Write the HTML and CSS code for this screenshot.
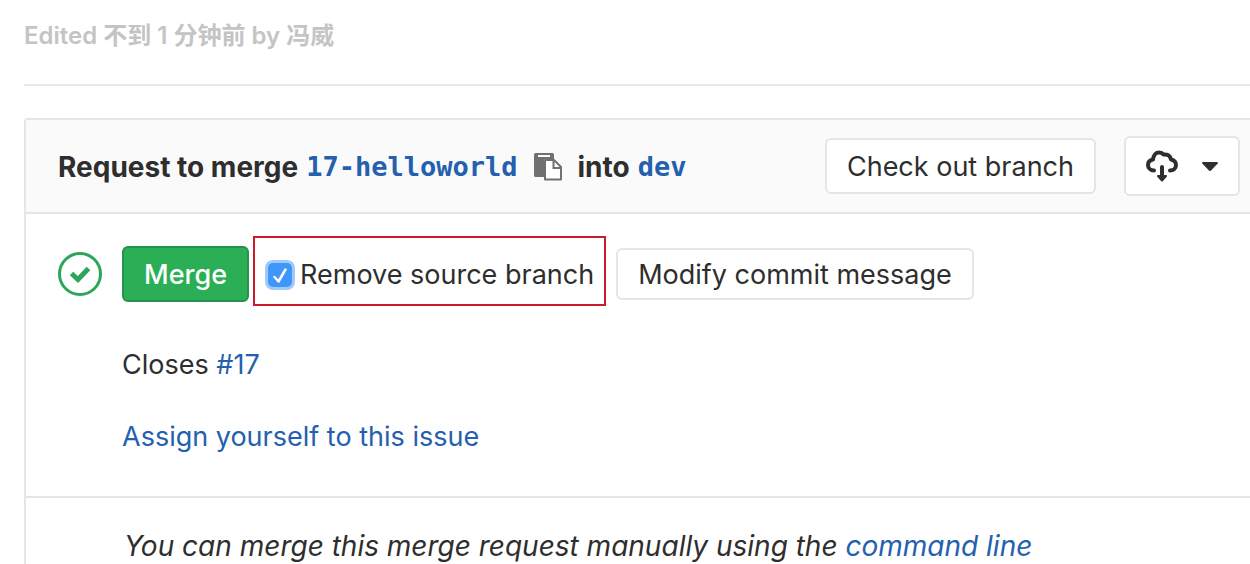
FILE: index.html
```html
<!DOCTYPE html>
<html lang="en">
<head>
<meta charset="utf-8">
<title>Merge request</title>
<link rel="stylesheet" href="styles.css">
</head>
<body>
<main class="page">
  <p class="edited">Edited <span lang="zh">不到</span> 1 <span lang="zh">分钟前</span> by <span lang="zh">冯威</span></p>
  <section class="widget">
    <header class="widget-header">
      <div class="branches">
        <span>Request to merge</span>
        <a class="branch" href="#source">17-helloworld</a>
        <button class="copy" type="button" aria-label="Copy branch name">
          <svg width="28" height="28" viewBox="0 0 28 28" fill="#707070">
            <path fill-rule="evenodd" d="M1.500 0h17A1.500 1.500 0 0 1 20 1.500V6h-7.500A2.500 2.500 0 0 0 10 8.500V24H1.500A1.500 1.500 0 0 1 0 22.500v-21A1.500 1.500 0 0 1 1.500 0ZM4 2v2h12V2Z"/>
            <path d="M12 7h8l7 7v12.500H11V8a1 1 0 0 1 1-1Z" fill="#fff" stroke="#707070" stroke-width="2" stroke-linejoin="round"/>
            <path d="M19.500 7v8H27" fill="none" stroke="#707070" stroke-width="2"/>
          </svg>
        </button>
        <span>into</span>
        <a class="branch" href="#target">dev</a>
      </div>
      <div class="header-actions">
        <button class="btn btn-tall" type="button">Check out branch</button>
        <button class="btn btn-download" type="button" aria-label="Download as">
          <svg width="32" height="32" viewBox="0 0 32 32" fill="none" stroke="#2e2e2e" stroke-width="4" stroke-linecap="round" stroke-linejoin="round">
            <path d="M8 20.500C4.500 20.500 2 18 2 15s2-5 5-5.500C7.500 5 10 2.500 13 2.500c2.200 0 3.500.7 4.500 2 4-.5 7 1.500 7.500 5 3 .7 5 2.800 5 5.500 0 3.300-2.500 5.500-6 5.500"/>
            <path d="M16 17v8"/>
            <path d="M12 26h8L16 30.500Z" fill="#2e2e2e" stroke-width="2"/>
          </svg>
          <svg width="16" height="10" viewBox="0 0 16 10" fill="#2e2e2e"><path d="M1 1h14q1.500.5.500 1.800L9 9.500q-1 1-2 0L.5 2.800Q-.5 1.500 1 1Z"/></svg>
        </button>
      </div>
    </header>
    <div class="widget-body">
      <svg class="status" width="44" height="44" viewBox="0 0 44 44" fill="none" stroke="#2da55a">
        <circle cx="22" cy="22" r="20.500" stroke-width="3"/>
        <path d="M13.500 21.500l6.500 6 10.500-11" stroke-width="5"/>
      </svg>
      <div class="details">
        <div class="merge-row">
          <button class="btn btn-merge" type="button">Merge</button>
          <label class="remove" for="remove-branch">
            <span class="tick">
              <input id="remove-branch" type="checkbox" checked>
              <svg width="24" height="24" viewBox="0 0 24 24" fill="none" stroke="#fff" stroke-width="2.500" stroke-linecap="round" stroke-linejoin="round"><path d="M6.500 14l4 4.500 7-12"/></svg>
            </span>
            Remove source branch
          </label>
          <button class="btn btn-modify" type="button">Modify commit message</button>
        </div>
        <p class="line">Closes <a href="#issue-17">#17</a></p>
        <p class="line"><a href="#assign">Assign yourself to this issue</a></p>
      </div>
    </div>
    <footer class="widget-footer">You can merge this merge request manually using the <a href="#cli">command line</a></footer>
  </section>
</main>
</body>
</html>
```

FILE: styles.css
```css
* { box-sizing: border-box; }
body {
  margin: 0;
  background: #fff;
  color: #2e2e2e;
  font: 27px/36px Inter, "Noto Sans CJK SC", sans-serif;
}
p { margin: 0; }
a { color: #2460ae; text-decoration: none; }
button { font: inherit; color: inherit; cursor: pointer; }
svg { display: block; flex: none; }
.page { padding: 18px 0 0 24px; }
.edited {
  padding-bottom: 30px;
  margin-bottom: 32px;
  border-bottom: 2px solid #e8e8e8;
  color: #c4c4c4;
  font-size: 24px;
  font-weight: 600;
}
.widget {
  border: 2px solid #e5e5e5;
  border-right: 0;
  border-bottom: 0;
  border-radius: 4px 0 0 0;
}
.widget-header {
  display: flex;
  align-items: center;
  justify-content: space-between;
  padding: 16px 10px 16px 32px;
  background: #fafafa;
  border-bottom: 2px solid #e5e5e5;
  white-space: nowrap;
}
.branches { display: flex; align-items: center; gap: 8px; padding-top: 2px; font-size: 28px; font-weight: 700; }
.branch { font: bold 27px/36px "DejaVu Sans Mono", monospace; }
.copy { margin: 0 8px; padding: 0; border: 0; background: none; }
.header-actions { display: flex; align-items: center; gap: 28px; }
.btn {
  padding: 7px 20px 5px;
  border: 2px solid #e5e5e5;
  border-radius: 6px;
  background: #fff;
  white-space: nowrap;
}
.btn-tall { padding: 9px 20px 7px; }
.btn-download { display: flex; align-items: center; gap: 24px; height: 60px; padding: 6px 20px; }
.widget-body {
  display: flex;
  align-items: flex-start;
  gap: 20px;
  padding: 22px 32px 23px;
  border-bottom: 2px solid #e5e5e5;
}
.status { margin-top: 16px; }
.merge-row { display: flex; align-items: center; margin-bottom: 23px; }
.btn-merge {
  margin-top: 6px;
  padding: 9px 20px 7px;
  background: #2aaf57;
  border-color: #27924b;
  color: #fff;
  font-weight: 500;
}
.btn-modify { margin-top: 6px; }
.remove {
  display: flex;
  align-items: center;
  gap: 8px;
  height: 70px;
  margin: 0 10px 0 4px;
  padding: 8px 10px 0 13px;
  border: 2px solid #cc1a2c;
  white-space: nowrap;
}
.tick { display: grid; }
.tick > * { grid-area: 1 / 1; }
.tick input {
  appearance: none;
  width: 24px;
  height: 24px;
  margin: 0;
  border-radius: 5px;
  background: #3f96fb;
  box-shadow: 0 0 0 3px #a0caf8;
}
.tick svg { pointer-events: none; z-index: 1; }
.line { padding: 18px 0; }
.widget-footer { padding: 30px 32px 0 98px; font-size: 28px; font-style: italic; }
```
